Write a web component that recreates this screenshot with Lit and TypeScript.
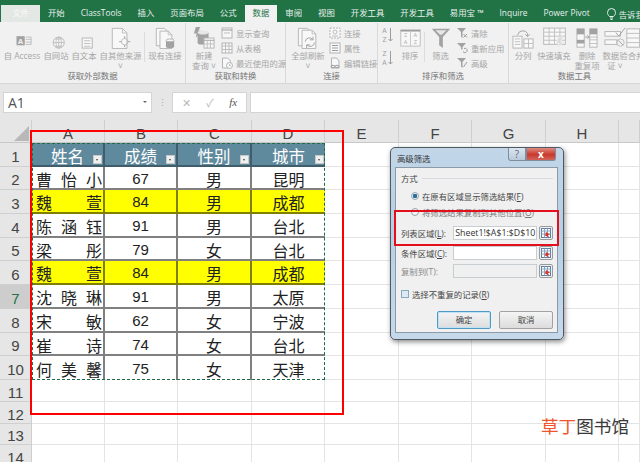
import { LitElement, html, css } from 'lit';
import { customElement } from 'lit/decorators.js';

const doc = html`<path class="pg" d="M3.5 1.5h11l5 5v17h-16z"/><path class="ln" d="M14.5 1.5v5h5"/>`;

const icons: Record<string, unknown> = {
  access: html`<svg class="big" viewBox="0 0 24 24">${doc}<rect class="dk" x="6" y="10" width="9" height="10"/><text class="badge" x="10.5" y="18">A</text><path class="ln" d="M16 11h6v8h-6M16 13.5h6M16 16.5h6"/></svg>`,
  web: html`<svg class="big" viewBox="0 0 24 24">${doc}<circle class="pg" cx="15" cy="17" r="6"/><path class="ln" d="M9 17h12M15 11v12M11 13h8M11 21h8"/><ellipse class="ln" cx="15" cy="17" rx="3" ry="6"/></svg>`,
  text: html`<svg class="big" viewBox="0 0 24 24">${doc}<rect class="pg" x="10" y="12" width="11" height="11"/><path class="ln" d="M12 15h7M12 18h7M12 21h7"/></svg>`,
  other: html`<svg class="big" viewBox="0 0 24 24"><path class="pg" d="M2.5 1.5h11l5 5v17h-16z"/><path class="ln" d="M13.5 1.5v5h5"/><circle class="ln" cx="16" cy="16" r="3.5"/><path class="dkl" d="M16 10v2.5M16 19.5V22M10 16h2.5M19.5 16H22"/></svg>`,
  existing: html`<svg class="big" viewBox="0 0 24 24"><path class="pg" d="M2.5 1.5h9l4 4v15h-13z"/><path class="pg" d="M6.5 4.5h9l4 4v15h-13z"/><path class="ln" d="M15.5 4.5v4h4"/><rect class="dk" x="13" y="14" width="9" height="9" rx="2"/><ellipse class="pg" cx="17.5" cy="14.5" rx="4.5" ry="1.5"/></svg>`,
  query: html`<svg class="big" viewBox="0 0 24 24"><path class="dk" d="M3 0h5L6 4h3l-6 8 1-5H1z"/><rect class="dk" x="5" y="5" width="12" height="14" rx="2"/><ellipse class="lt" cx="11" cy="6" rx="6" ry="2.2"/><rect class="pg" x="12" y="12" width="11" height="11"/><path class="dkl" d="M12 14.5h11"/><path class="ln" d="M12 18.5h11M15.5 14.5V23M19 14.5V23"/></svg>`,
  refresh: html`<svg class="big" viewBox="0 0 24 24"><path class="pg" d="M1.5 1.5h10l4 4v15h-14z"/><path class="pg" d="M5.5 3.5h11l4 4v16h-15z"/><path class="ln" d="M16.5 3.5v4h4"/><path class="dkl" d="M9 16a4.5 4.5 0 0 1 8-2.5M19 17a4.5 4.5 0 0 1-8 2.5M17.5 10.5v3.5H14M10.5 23v-3.5H14"/></svg>`,
  sort: html`<svg class="big sort" viewBox="0 0 26 22"><rect class="pg" x="1" y="1" width="24" height="20"/><path class="dkl thick" d="M1 2h24"/><path class="ln" d="M13 1v20"/><text class="mini" x="7" y="10">Z</text><text class="mini" x="7" y="19">A</text><text class="mini" x="19" y="10">A</text><text class="mini" x="19" y="19">Z</text></svg>`,
  funnel: html`<svg class="big" viewBox="0 0 24 24"><path class="dk" d="M2 2h20l-8 9v12l-4-3v-9z"/><path class="lt" d="M6 3.5h12l-5 5h-2z"/></svg>`,
  split: html`<svg class="big" viewBox="0 0 24 24"><rect class="pg" x="1" y="10" width="10" height="13"/><path class="ln" d="M3 13h6M3 16h6M3 19h6"/><rect class="pg" x="13" y="13" width="10" height="10"/><path class="ln" d="M18 13v10M13 18h10"/><path class="dkl" d="M6 9a6 6 0 0 1 11-2v3M14.5 8l2.5 2.5L19.5 8"/></svg>`,
  flash: html`<svg class="big wide" viewBox="0 0 30 24"><rect class="pg" x="3" y="1" width="24" height="18"/><path class="ln" d="M3 5.500h24M3 10h24M3 14.500h24M9 1v18M15 1v18M21 1v18"/><path class="lt2" d="M19 11h6l-3 5h3l-7 8 2-6h-3z"/></svg>`,
  dedupe: html`<svg class="big" viewBox="0 0 24 24"><rect class="pg" x="1" y="2" width="8" height="20"/><rect class="dk" x="1" y="2" width="8" height="6"/><rect class="dk" x="1" y="14" width="8" height="4"/><rect class="pg" x="15" y="2" width="8" height="20"/><rect class="dk" x="15" y="2" width="8" height="6"/><path class="ln" d="M15 11h8M15 14h8M15 18h8"/><path class="dkl" d="M10 11h4M12.500 9l2 2-2 2"/></svg>`,
  validate: html`<svg class="big" viewBox="0 0 24 24"><rect class="pg" x="1" y="5" width="17" height="5"/><rect class="pg" x="1" y="14" width="13" height="5"/><path class="dkl" d="M13 6l3 4 7-9"/><circle class="ln" cx="18" cy="17" r="4"/><path class="dkl" d="M15.500 14.500l5 5"/></svg>`,
  merge: html`<svg class="big" viewBox="0 0 24 24"><rect class="pg" x="2" y="2" width="14" height="20"/><path class="ln" d="M2 7h14M2 12h14M2 17h14"/></svg>`,
  sAz: html`<svg class="sortsm" viewBox="0 0 12 17"><text class="mini dark" x="3.500" y="7">A</text><text class="mini dark" x="3.500" y="16">Z</text><path class="dkl" d="M9.500 2v13M7.500 13l2 2 2-2"/></svg>`,
  sZa: html`<svg class="sortsm" viewBox="0 0 12 17"><text class="mini dark" x="3.500" y="7">Z</text><text class="mini dark" x="3.500" y="16">A</text><path class="dkl" d="M9.500 2v13M7.500 13l2 2 2-2"/></svg>`,
  show: html`<svg class="sm" viewBox="0 0 12 12"><rect class="pg" x="1" y="1" width="10" height="10"/><path class="dkl" d="M1 3h10"/><path class="ln" d="M3 6h6"/></svg>`,
  table: html`<svg class="sm" viewBox="0 0 12 12"><rect class="pg" x="1" y="1" width="10" height="10"/><path class="ln" d="M1 4h10M1 7.500h10M4.500 1v10M8 1v10"/></svg>`,
  recent: html`<svg class="sm" viewBox="0 0 12 12"><path class="pg" d="M1.500 1h5l3 3v7h-8z"/><circle class="pg" cx="8.500" cy="8.500" r="3"/><path class="ln" d="M8.500 7v1.500h1.500"/></svg>`,
  conn: html`<svg class="sm" viewBox="0 0 12 12"><rect class="dash" x="1" y="1" width="10" height="10"/><circle class="ln" cx="6" cy="5" r="2"/><path class="ln" d="M3 9h6"/></svg>`,
  props: html`<svg class="sm" viewBox="0 0 12 12"><rect class="pg" x="1" y="1" width="10" height="10"/><path class="dkl" d="M3 3.500h6M3 6h6M3 8.500h6"/></svg>`,
  links: html`<svg class="sm" viewBox="0 0 12 12"><path class="pg" d="M2.500 1h5l2.500 3v7H2.500z"/><ellipse class="dkl" cx="4" cy="9.500" rx="2" ry="1.200"/><ellipse class="dkl" cx="8" cy="9.500" rx="2" ry="1.200"/></svg>`,
  clear: html`<svg class="sm" viewBox="0 0 12 12"><path class="dk" d="M1 1h9L6.500 5v6L5 9.500V5z"/><path class="dkl" d="M7.500 7l3.500 3.500M11 7l-3.500 3.500"/></svg>`,
  reapply: html`<svg class="sm" viewBox="0 0 12 12"><path class="dk" d="M1 1h9L6.500 5v3L5 7V5z"/><path class="dkl" d="M7 9.500a2.200 2.200 0 1 0 1-3"/></svg>`,
  advanced: html`<svg class="sm" viewBox="0 0 12 12"><path class="dk" d="M1 1h9L6.500 5v6L5 9.500V5z"/><path class="dkl" d="M7.500 10L11 5"/></svg>`,
};

interface Item {
  kind: 'large' | 'small' | 'sep' | 'sort';
  w?: number;
  icon?: string;
  lines?: string[];
  rows?: [string, string][];
}

const group = (w: number, label: string, items: Item[]) => ({ w, label, items });
const large = (w: number, icon: string, ...lines: string[]): Item => ({ kind: 'large', w, icon, lines });
const small = (w: number, ...rows: [string, string][]): Item => ({ kind: 'small', w, rows });
const sep: Item = { kind: 'sep' };

const groups = [
  group(186, '获取外部数据', [
    large(40, 'access', '自 Access'),
    large(28, 'web', '自网站'),
    large(28, 'text', '自文本'),
    large(45, 'other', '自其他来源', '˅'),
    sep,
    large(38, 'existing', '现有连接'),
  ]),
  group(100, '获取和转换', [
    large(32, 'query', '新建', '查询 ˅'),
    small(66, ['show', '显示查询'], ['table', '从表格'], ['recent', '最近使用的源']),
  ]),
  group(92, '连接', [
    large(40, 'refresh', '全部刷新', '˅'),
    small(50, ['conn', '连接'], ['props', '属性'], ['links', '编辑链接']),
  ]),
  group(131, '排序和筛选', [
    { kind: 'sort' },
    large(26, 'sort', '排序'),
    sep,
    large(29, 'funnel', '筛选'),
    small(50, ['clear', '清除'], ['reapply', '重新应用'], ['advanced', '高级']),
  ]),
  group(131, '数据工具', [
    large(24, 'split', '分列'),
    large(38, 'flash', '快速填充'),
    large(28, 'dedupe', '删除', '重复项'),
    large(28, 'validate', '数据验', '证 ˅'),
    large(14, 'merge', '合并'),
  ]),
];

const tabs = ['开始', 'ClassTools', '插入', '页面布局', '公式', '数据', '审阅', '视图', '开发工具', '开发工具', '易用宝 ™', 'Inquire', 'Power Pivot'];

const columns = ['A', 'B', 'C', 'D', 'E', 'F', 'G', 'H', ''];
const rowHeights = [24, 23, 24, 24, 23, 24, 24, 24, 23, 24, 22, 22, 21, 22];
const heads = ['姓名', '成绩', '性别', '城市'];
const people: { name: string; score: number; sex: string; city: string; hit?: boolean }[] = [
  { name: '曹怡小', score: 67, sex: '男', city: '昆明' },
  { name: '魏萱', score: 84, sex: '男', city: '成都', hit: true },
  { name: '陈涵钰', score: 91, sex: '男', city: '台北' },
  { name: '梁彤', score: 79, sex: '女', city: '台北' },
  { name: '魏萱', score: 84, sex: '男', city: '成都', hit: true },
  { name: '沈晓琳', score: 91, sex: '男', city: '太原' },
  { name: '宋敏', score: 62, sex: '女', city: '宁波' },
  { name: '崔诗', score: 74, sex: '女', city: '台北' },
  { name: '何美馨', score: 75, sex: '女', city: '天津' },
];

const refIcon = html`<svg class="ref" viewBox="0 0 14 14">
  <rect x="0.500" y="0.500" width="13" height="13" rx="1.500" fill="#f0f0f0" stroke="#9a9a9a"/>
  <rect x="2.500" y="2.500" width="9" height="9" fill="#fff" stroke="#5c7fa8"/>
  <path d="M2.500 5h9M2.500 8h9M5.500 2.500v9M8.500 2.500v9" stroke="#8aa4c4" fill="none"/>
  <path d="M7 6l4 2.500-2 .5 1 2.500-4-2z" fill="#d8342a"/>
</svg>`;

@customElement('app-root')
export class AppRoot extends LitElement {
  static styles = css`
    :host {
      display: block;
      position: relative;
      width: 640px;
      height: 462px;
      overflow: hidden;
      background: #fff;
      font-family: 'Open Sans', 'Noto Sans CJK SC', sans-serif;
      font-size: 8.4px;
      color: #333;
    }

    /* tabs */
    .tabs {
      display: flex;
      align-items: flex-end;
      height: 22px;
      padding-left: 1px;
      overflow: hidden;
      background: #217346;
      color: #e8f1ec;
      white-space: nowrap;
    }
    .tab {
      flex: none;
      height: 17px;
      line-height: 16px;
      padding: 0 8px;
    }
    .tab.file {
      width: 39px;
      padding: 0;
      text-align: center;
      background: #e4e8e5;
      color: #f8f8f8;
    }
    .tab.on {
      background: #f1f1f1;
      color: #217346;
    }
    .tell {
      flex: none;
      display: flex;
      align-items: center;
      gap: 3px;
      height: 17px;
      margin-left: 9px;
    }
    .tell svg {
      width: 9px;
      height: 12px;
      fill: none;
      stroke: #e8f1ec;
    }

    /* ribbon */
    .ribbon {
      display: flex;
      height: 62px;
      overflow: hidden;
      background: #f1f1f1;
      border-bottom: 1px solid #d6d6d6;
      box-sizing: border-box;
      color: #a6a6a6;
      white-space: nowrap;
    }
    .group {
      display: flex;
      flex: none;
      flex-direction: column;
      box-sizing: border-box;
      height: 60px;
      margin-top: 1px;
      border-right: 1px solid #d9d9d9;
    }
    .group:last-child {
      border-right: 0;
    }
    .items {
      display: flex;
      flex: 1;
      padding-left: 2px;
    }
    .glabel {
      height: 12px;
      line-height: 10px;
      text-align: center;
      color: #747474;
    }
    .large {
      flex: none;
      display: flex;
      flex-direction: column;
      align-items: center;
      padding-top: 3px;
      line-height: 10px;
    }
    .iconbox {
      height: 24px;
      margin-bottom: 1px;
      display: flex;
      align-items: center;
    }
    .big {
      width: 22px;
      height: 22px;
    }
    .big.sort {
      width: 21px;
      height: 18px;
    }
    .big.wide {
      width: 27px;
    }
    .small {
      flex: none;
      display: flex;
      flex-direction: column;
      padding: 2px 0 0 1px;
    }
    .srow {
      display: flex;
      align-items: center;
      gap: 3px;
      height: 15px;
    }
    .sm {
      width: 12px;
      height: 12px;
    }
    .sortcol {
      flex: none;
      display: flex;
      flex-direction: column;
      gap: 6px;
      width: 17px;
      padding: 3px 0 0 1px;
      box-sizing: border-box;
    }
    .sortsm {
      width: 12px;
      height: 17px;
    }
    .sep {
      flex: none;
      width: 1px;
      height: 30px;
      margin: 9px 1px 0;
      background: #dcdcdc;
    }
    .pg { fill: #f8f8f8; stroke: #b4b4b4; }
    .ln { fill: none; stroke: #bdbdbd; }
    .dk { fill: #a2a2a2; stroke: none; }
    .dkl { fill: none; stroke: #9c9c9c; }
    .dkl.thick { stroke-width: 2; }
    .lt { fill: #e6e6e6; stroke: none; }
    .lt2 { fill: #dcdcdc; stroke: #f1f1f1; }
    .dash { fill: #f8f8f8; stroke: #b4b4b4; stroke-dasharray: 2 1; }
    .badge { fill: #f1f1f1; font-size: 8px; font-weight: 700; text-anchor: middle; }
    .mini { fill: #aaa; font-size: 7px; text-anchor: middle; }
    .mini.dark { fill: #a0a0a0; }

    /* formula bar */
    .fbar {
      display: flex;
      align-items: center;
      height: 36px;
      padding-left: 3px;
      box-sizing: border-box;
      background: #e6e6e6;
    }
    .box {
      height: 21px;
      box-sizing: border-box;
      background: #fff;
      border: 1px solid #d4d4d4;
      display: flex;
      align-items: center;
    }
    .name {
      width: 149px;
      padding: 0 4px;
      justify-content: space-between;
      font-size: 14px;
      color: #555;
    }
    .name i {
      width: 0;
      height: 0;
      border: 2px solid transparent;
      border-top: 2px solid #666;
      margin-top: 2px;
    }
    .grip {
      width: 20px;
      text-align: center;
      font-size: 9px;
      color: #a8a8a8;
    }
    .fx {
      width: 75px;
      justify-content: space-around;
      margin-right: 3px;
      padding: 0 1px;
      color: #b8b8b8;
      font-size: 11px;
    }
    .fx em {
      color: #555;
      font-family: 'Liberation Serif', serif;
    }
    .input {
      flex: 1;
      border-right: 0;
    }

    /* sheet */
    .sheet {
      position: relative;
      display: grid;
      grid-template-columns: 32px 73px 73px 74px 73px 74px 73px 74px 73px 21px;
      grid-template-rows: 23px repeat(14, auto);
    }
    .corner {
      display: flex;
      align-items: flex-end;
      justify-content: flex-end;
      padding: 0 2px 1px 0;
      background: #e6e6e6;
      border-right: 1px solid #d0d0d0;
      border-bottom: 1px solid #c8c8c8;
    }
    .corner i {
      width: 0;
      height: 0;
      border-left: 15px solid transparent;
      border-bottom: 15px solid #b8b8b8;
    }
    .colh {
      display: flex;
      align-items: flex-end;
      justify-content: center;
      background: #e6e6e6;
      border-right: 1px solid #cfcfcf;
      border-bottom: 1px solid #c8c8c8;
      font-family: 'Liberation Sans', sans-serif;
      font-size: 15px;
      line-height: 17px;
      color: #444;
    }
    .rowh {
      display: flex;
      align-items: center;
      justify-content: center;
      box-sizing: border-box;
      padding-top: 3px;
      background: #e6e6e6;
      border-bottom: 1px solid #cfcfcf;
      border-right: 1px solid #cfcfcf;
      font-family: 'Liberation Sans', sans-serif;
      font-size: 15px;
      line-height: 17px;
      color: #444;
    }
    .rowh.sel {
      background: #cdcdcd;
      color: #217346;
    }
    .cell {
      min-width: 0;
      border-right: 1px solid #e4e4e4;
      border-bottom: 1px solid #e4e4e4;
    }
    .d {
      display: flex;
      align-items: center;
      justify-content: center;
      min-width: 0;
      padding-top: 2px;
      border-right: 2px solid #808080;
      border-bottom: 2px solid #808080;
      box-sizing: border-box;
      font-size: 16px;
      line-height: 18px;
      color: #222;
      font-family: 'Noto Sans CJK SC', sans-serif;
    }
    .d.num {
      font-family: 'Liberation Sans', sans-serif;
      font-size: 15px;
    }
    .d.name-cell {
      justify-content: space-between;
      padding: 2px 1px 0 4px;
    }
    .d.hit {
      background: #ffff00;
      border-color: #808000;
    }
    .d.hd {
      position: relative;
      padding-top: 3px;
      background: #5f8a9e;
      color: #fff;
      border-right: 2px solid #3f5d6b;
      border-bottom: 2px solid #3f5d6b;
      font-size: 16.500px;
    }
    .d.last {
      border-bottom: 0;
    }
    .d.end {
      border-right: 0;
    }
    .filter {
      position: absolute;
      right: 1px;
      bottom: 1px;
      width: 9px;
      height: 9px;
      background: #f0f0f0;
      border: 1px solid #c8c8c8;
      box-sizing: border-box;
    }
    .filter::after {
      content: '';
      position: absolute;
      left: 2px;
      top: 3px;
      border: 1.500px solid transparent;
      border-top: 2px solid #444;
    }
    .ants {
      position: absolute;
      inset: 0;
      grid-row: 2 / 12;
      grid-column: 2 / 6;
      border: 1.500px dashed #1f6b45;
      pointer-events: none;
    }

    /* overlays */
    .mark {
      position: absolute;
      box-sizing: border-box;
      border: 2px solid #f00;
      pointer-events: none;
    }
    .mark.sheetmark {
      left: 30px;
      top: 130px;
      width: 314px;
      height: 285px;
    }
    .mark.listmark {
      left: 394px;
      top: 210px;
      width: 165px;
      height: 36px;
      border-color: #e3101c;
    }

    /* dialog */
    .dialog {
      position: absolute;
      left: 390px;
      top: 147px;
      width: 174px;
      height: 193px;
      box-sizing: border-box;
      padding: 0 5px 6px 4px;
      display: flex;
      flex-direction: column;
      background: linear-gradient(#c2d6e8, #b7cfe4 40%, #c6d9ea);
      border: 1px solid #4d5a64;
      border-radius: 5px;
      box-shadow: 1px 2px 5px rgba(0, 0, 0, 0.45);
    }
    .title {
      flex: none;
      display: flex;
      height: 19px;
      padding-left: 2px;
      line-height: 21px;
      color: #333;
    }
    .title span {
      flex: 1;
    }
    .help,
    .close {
      height: 13px;
      box-sizing: border-box;
      text-align: center;
      font-size: 10px;
      line-height: 12px;
      border: 1px solid #7d8d9c;
      border-top: 0;
    }
    .help {
      width: 18px;
      color: #5a6b7a;
      background: linear-gradient(#dbe6f1, #b9cadb);
      border-radius: 0 0 0 3px;
    }
    .close {
      width: 30px;
      margin: 0 2px 0 0;
      color: #fff;
      font-weight: 700;
      background: linear-gradient(#e08a80, #c8392c 55%, #d4645a);
      border-radius: 0 0 3px 0;
    }
    .panel {
      flex: 1;
      display: flex;
      flex-direction: column;
      padding: 4px 4px 0 5px;
      background: #f0f0f0;
      border: 1px solid #8b9aa8;
      color: #444;
    }
    .legend {
      display: flex;
      align-items: center;
      gap: 4px;
      height: 12px;
      margin-bottom: 4px;
    }
    .legend i {
      flex: 1;
      height: 1px;
      background: #d8dce0;
    }
    .radio {
      display: flex;
      align-items: center;
      gap: 3px;
      height: 16px;
      padding-left: 10px;
    }
    .radio.off {
      color: #777;
    }
    .radio i {
      width: 8px;
      height: 8px;
      box-sizing: border-box;
      border: 1px solid #98a4ae;
      border-radius: 50%;
      background: #f4f4f4;
    }
    .radio.on i {
      background: radial-gradient(circle, #2a6f9c 0 2px, #eef2f5 2.500px);
    }
    .field {
      display: flex;
      align-items: center;
      height: 14px;
      margin-top: 6px;
    }
    .field.third {
      margin-top: 4px;
      color: #8a8a8a;
    }
    .field label {
      width: 53px;
      white-space: nowrap;
    }
    .value {
      width: 85px;
      height: 14px;
      box-sizing: border-box;
      margin-right: 2px;
      padding-left: 1px;
      background: #fff;
      border: 1px solid #c8cdd2;
      font-size: 8.800px;
      line-height: 12px;
      color: #333;
      white-space: nowrap;
      overflow: hidden;
    }
    .third .value {
      background: #f0f0f0;
    }
    .ref {
      flex: none;
      width: 14px;
      height: 14px;
    }
    .check {
      display: flex;
      align-items: center;
      gap: 3px;
      height: 12px;
      margin-top: 10px;
    }
    .check i {
      width: 8px;
      height: 8px;
      box-sizing: border-box;
      border: 1px solid #8aa8c0;
      background: #dbe9f4;
    }
    .actions {
      display: flex;
      justify-content: flex-end;
      gap: 8px;
      margin-top: 11px;
    }
    .btn {
      width: 54px;
      height: 18px;
      box-sizing: border-box;
      border: 1px solid #a2a2a2;
      border-radius: 2px;
      background: linear-gradient(#f4f4f4, #dcdcdc);
      text-align: center;
      line-height: 16px;
    }
    .btn.def {
      border-color: #4f9ac4;
      box-shadow: inset 0 0 0 1px #bfe3f5;
    }

    .wm {
      position: absolute;
      left: 541px;
      top: 414px;
      font-family: 'Noto Sans CJK SC', sans-serif;
      font-size: 17.600px;
      line-height: 24px;
      color: #3a3a3a;
      white-space: nowrap;
    }
    .wm b {
      font-weight: 400;
      color: #f0562a;
    }
  `;

  private renderItem(item: Item) {
    if (item.kind === 'sep') return html`<div class="sep"></div>`;
    if (item.kind === 'sort') {
      return html`<div class="sortcol">${icons.sAz}${icons.sZa}</div>`;
    }
    if (item.kind === 'small') {
      return html`<div class="small" style="width:${item.w}px">
        ${item.rows!.map(([icon, text]) => html`<div class="srow">${icons[icon]}<span>${text}</span></div>`)}
      </div>`;
    }
    return html`<div class="large" style="width:${item.w}px">
      <div class="iconbox">${icons[item.icon!]}</div>
      ${item.lines!.map((l) => html`<div>${l}</div>`)}
    </div>`;
  }

  private renderRow(i: number) {
    const num = i + 1;
    const style = `height:${rowHeights[i]}px`;
    const cells = [];
    if (i === 0) {
      heads.forEach((t, c) => cells.push(html`<div class="d hd ${c === 3 ? 'end' : ''}">${t}<i class="filter"></i></div>`));
    } else if (i <= 9) {
      const p = people[i - 1];
      const mods = `${p.hit ? 'hit' : ''} ${i === 9 ? 'last' : ''}`;
      cells.push(html`<div class="d name-cell ${mods}">${[...p.name].map((c) => html`<span>${c}</span>`)}</div>`);
      cells.push(html`<div class="d num ${mods}">${p.score}</div>`);
      cells.push(html`<div class="d ${mods}">${p.sex}</div>`);
      cells.push(html`<div class="d end ${mods}">${p.city}</div>`);
    } else {
      for (let c = 0; c < 4; c++) cells.push(html`<div class="cell"></div>`);
    }
    return html`
      <div class="rowh ${num === 7 ? 'sel' : ''}" style=${style}>${num}</div>
      ${cells}
      ${[0, 1, 2, 3, 4].map(() => html`<div class="cell"></div>`)}
    `;
  }

  render() {
    return html`
      <div class="tabs">
        <div class="tab file">文件</div>
        ${tabs.map((t) => html`<div class="tab ${t === '数据' ? 'on' : ''}">${t}</div>`)}
        <div class="tell">
          <svg viewBox="0 0 9 12"><path d="M2.500 8.500C1 7 .5 6 .5 4.500a4 4 0 0 1 8 0C8.500 6 8 7 6.500 8.500zM3 10h3M3.500 11.500h2"/></svg>
          <span>告诉我</span>
        </div>
      </div>
      <div class="ribbon">
        ${groups.map((g) => html`
          <div class="group" style="width:${g.w}px">
            <div class="items">${g.items.map((it) => this.renderItem(it))}</div>
            <div class="glabel">${g.label}</div>
          </div>
        `)}
      </div>
      <div class="fbar">
        <div class="box name">A1<i></i></div>
        <div class="grip">⋮</div>
        <div class="box fx"><span>✕</span><span>✓</span><em>fx</em></div>
        <div class="box input"></div>
      </div>
      <div class="sheet">
        <div class="corner"><i></i></div>
        ${columns.map((c) => html`<div class="colh">${c}</div>`)}
        ${rowHeights.map((_, i) => this.renderRow(i))}
        <div class="ants"></div>
      </div>

      <div class="mark sheetmark"></div>

      <div class="dialog">
        <div class="title"><span>高级筛选</span><div class="help">?</div><div class="close">x</div></div>
        <div class="panel">
          <div class="legend">方式<i></i></div>
          <div class="radio on"><i></i><span>在原有区域显示筛选结果(<u>F</u>)</span></div>
          <div class="radio off"><i></i><span>将筛选结果复制到其他位置(<u>O</u>)</span></div>
          <div class="field"><label>列表区域(<u>L</u>):</label><div class="value">Sheet1!$A$1:$D$10</div>${refIcon}</div>
          <div class="field"><label>条件区域(<u>C</u>):</label><div class="value"></div>${refIcon}</div>
          <div class="field third"><label>复制到(T):</label><div class="value"></div>${refIcon}</div>
          <div class="check"><i></i><span>选择不重复的记录(<u>R</u>)</span></div>
          <div class="actions"><div class="btn def">确定</div><div class="btn">取消</div></div>
        </div>
      </div>
      <div class="mark listmark"></div>

      <div class="wm"><b>草丁</b>图书馆</div>
    `;
  }
}
